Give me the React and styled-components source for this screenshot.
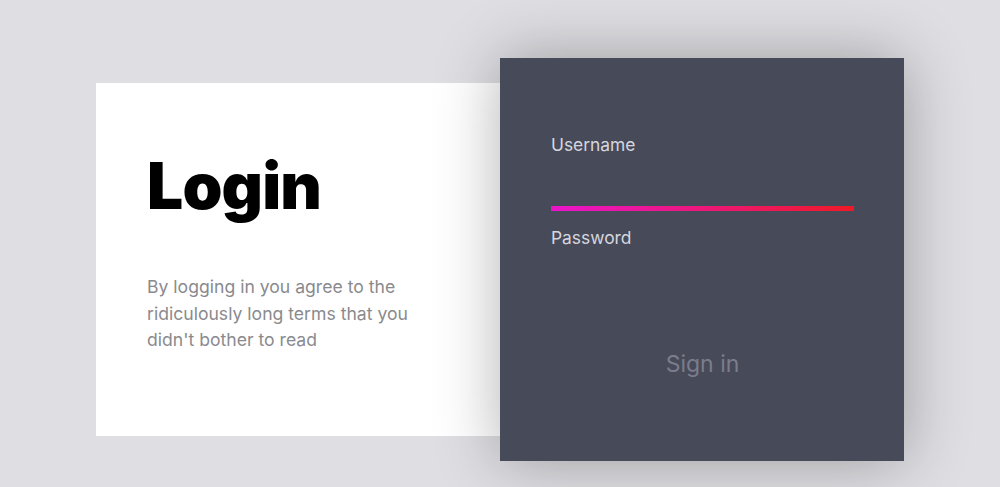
import styled, { createGlobalStyle } from 'styled-components';

const GlobalStyle = createGlobalStyle`
  html, body {
    margin: 0;
    padding: 0;
    background: #dfdfe3;
    font-family: Inter, "Noto Sans", sans-serif;
  }
`;

const Page = styled.div`
  display: flex;
  justify-content: center;
  align-items: center;
  padding-top: 58px;
  min-height: 100vh;
  box-sizing: border-box;
  align-content: flex-start;
  flex-wrap: wrap;
`;

const InfoCard = styled.div`
  width: 404px;
  height: 353px;
  box-sizing: border-box;
  background: #fff;
  padding: 64px 50px 0 51px;
`;

const Title = styled.h1`
  margin: 0;
  font-size: 64px;
  font-weight: 900;
  letter-spacing: -0.8px;
  color: #000;
  line-height: 78px;
`;

const Terms = styled.p`
  margin: 49px 0 0;
  width: 275px;
  font-size: 17.6px;
  line-height: 26.5px;
  color: #8a8a8e;
`;

const FormPanel = styled.form`
  width: 404px;
  height: 403px;
  box-sizing: border-box;
  background: #474a59;
  padding: 75px 50px 0 51px;
  display: flex;
  flex-direction: column;
  box-shadow: 0 0 60px rgba(0, 0, 0, 0.3);
  position: relative;
  z-index: 1;
`;

const Label = styled.label`
  font-size: 17.4px;
  line-height: 24px;
  color: #d6d6de;
`;

const Field = styled.input`
  display: block;
  width: 100%;
  height: 54px;
  margin: 0 0 15px;
  padding: 0;
  box-sizing: border-box;
  background: transparent;
  border: none;
  border-bottom: 5px solid transparent;
  border-image: ${p => (p.$active ? 'linear-gradient(90deg, #ea15cc, #ee1a26) 1' : 'none')};
  outline: none;
  color: #fff;
  font: inherit;
`;

const SignIn = styled.button`
  align-self: center;
  margin-top: 30px;
  background: none;
  border: none;
  font-family: inherit;
  font-size: 23px;
  color: #7a7d8b;
  cursor: pointer;
`;

export default function App() {
  return (
    <>
      <GlobalStyle />
      <Page>
        <InfoCard>
          <Title>Login</Title>
          <Terms>
            By logging in you agree to the ridiculously long terms that you didn't bother to read
          </Terms>
        </InfoCard>
        <FormPanel onSubmit={e => e.preventDefault()}>
          <Label htmlFor="username">Username</Label>
          <Field id="username" type="text" $active />
          <Label htmlFor="password">Password</Label>
          <Field id="password" type="password" />
          <SignIn type="submit">Sign in</SignIn>
        </FormPanel>
      </Page>
    </>
  );
}
